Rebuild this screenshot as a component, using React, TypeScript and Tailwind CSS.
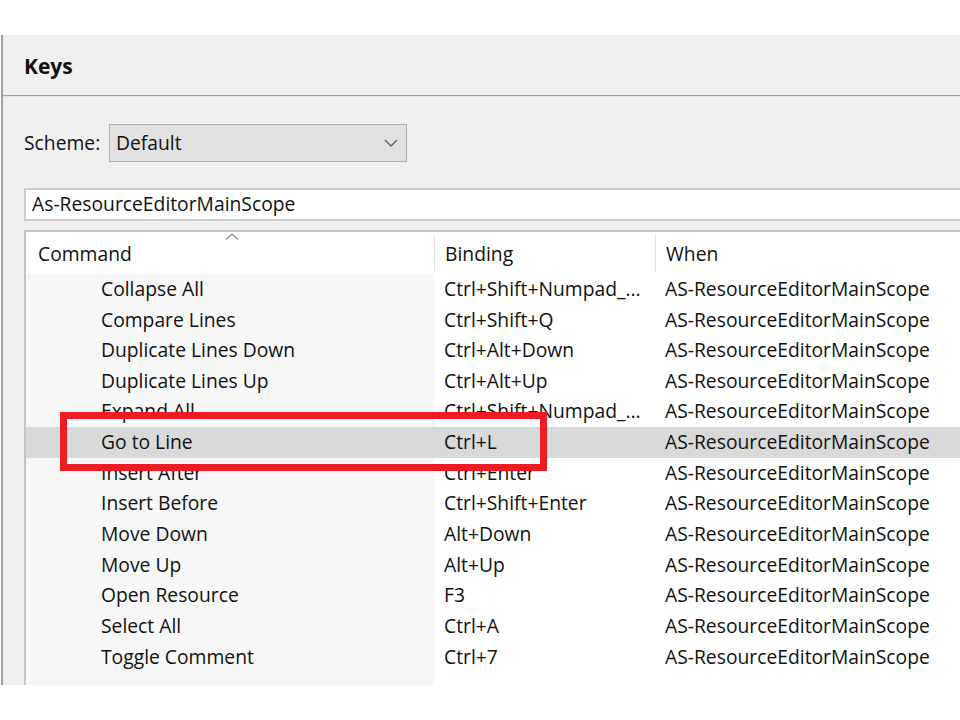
import React from "react";

const ROWS: [string, string][] = [
  ["Collapse All", "Ctrl+Shift+Numpad_..."],
  ["Compare Lines", "Ctrl+Shift+Q"],
  ["Duplicate Lines Down", "Ctrl+Alt+Down"],
  ["Duplicate Lines Up", "Ctrl+Alt+Up"],
  ["Expand All", "Ctrl+Shift+Numpad_..."],
  ["Go to Line", "Ctrl+L"],
  ["Insert After", "Ctrl+Enter"],
  ["Insert Before", "Ctrl+Shift+Enter"],
  ["Move Down", "Alt+Down"],
  ["Move Up", "Alt+Up"],
  ["Open Resource", "F3"],
  ["Select All", "Ctrl+A"],
  ["Toggle Comment", "Ctrl+7"],
];

const SELECTED = "Go to Line";
const SCOPE = "AS-ResourceEditorMainScope";

function Chevron() {
  return (
    <svg width="14" height="8" viewBox="0 0 14 8" fill="none">
      <path d="M1 1l6 6 6-6" stroke="#5f5f5f" strokeWidth="1.4" />
    </svg>
  );
}

function SortCaret() {
  return (
    <svg width="14" height="7" viewBox="0 0 14 7" fill="none">
      <path d="M1 6.5L7 1l6 5.5" stroke="#8c8c8c" strokeWidth="1.2" />
    </svg>
  );
}

export default function App() {
  return (
    <div
      className="relative w-[960px] h-[720px] bg-white overflow-hidden pt-[35px] text-[19.3px] text-[#111]"
      style={{ fontFamily: '"Open Sans", "Noto Sans", sans-serif' }}
    >
      {/* Preferences page */}
      <div className="ml-px h-[650px] w-[1100px] border-l-2 border-[#a0a0a0] bg-[#f0f0f0] overflow-hidden">
        <div className="h-[60px] flex items-center pl-[21px] pt-[4px] text-[21px] font-bold">Keys</div>
        <div className="h-px bg-[#a0a0a0]" />
        <div className="h-px bg-[#e4e4e4]" />

        <div className="pl-[21px]">
          {/* Scheme */}
          <div className="mt-[27px] flex items-center">
            <span className="w-[85px]">Scheme:</span>
            <div className="w-[298px] h-[38px] border border-[#adadad] bg-[#e1e1e1] flex items-center justify-between pl-[6px] pr-[8px]">
              <span>Default</span>
              <Chevron />
            </div>
          </div>

          {/* Filter */}
          <div className="mt-[26px] h-[33px] border-2 border-[#cdcdcd] bg-white flex items-center pl-[6px]">
            As-ResourceEditorMainScope
          </div>

          {/* Table */}
          <div className="mt-[9px] border-2 border-[#c4c4c4] bg-white flex flex-col h-[520px]">
            <div className="grid grid-cols-[408px_221px_1fr] h-[42px] shrink-0 bg-white">
              <div className="relative flex items-center pl-[12px] pt-[2px]">
                Command
                <div className="absolute left-[199px] top-[1px]">
                  <SortCaret />
                </div>
              </div>
              <div className="flex items-center pl-[10px] pt-[2px] border-l border-[#e5e5e5] my-[2px]">Binding</div>
              <div className="flex items-center pl-[10px] pt-[2px] border-l border-[#e5e5e5] my-[2px]">When</div>
            </div>
            {ROWS.map(([cmd, key]) => {
              const sel = cmd === SELECTED;
              return (
                <div
                  key={cmd}
                  className={`grid grid-cols-[408px_221px_1fr] h-[30.67px] shrink-0 ${sel ? "bg-[#d9d9d9]" : ""}`}
                >
                  <div className={`flex items-center pl-[75px] ${sel ? "" : "bg-[#f7f7f7]"}`}>{cmd}</div>
                  <div className="flex items-center pl-[10px]">{key}</div>
                  <div className="flex items-center pl-[10px]">{SCOPE}</div>
                </div>
              );
            })}
            <div className="grid grid-cols-[408px_221px_1fr] flex-1">
              <div className="bg-[#f7f7f7]" />
            </div>
          </div>
        </div>
      </div>

      {/* Red annotation box */}
      <div className="absolute left-[60px] top-[412px] w-[487px] h-[59px] border-[7px] border-[#ed1c24]" />
    </div>
  );
}
